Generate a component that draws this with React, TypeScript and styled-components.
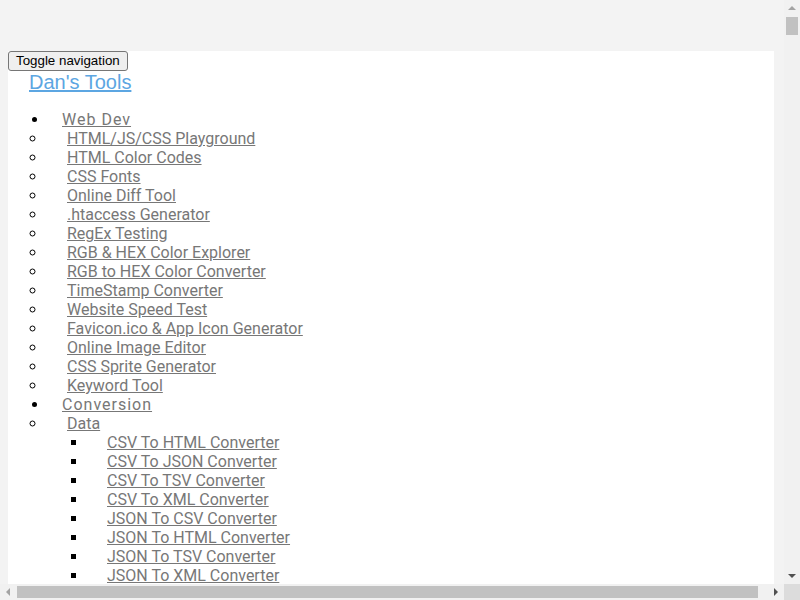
import styled, { createGlobalStyle, css } from "styled-components";

const GlobalStyle = createGlobalStyle`
  html, body {
    margin: 0;
    height: 100%;
    overflow: hidden;
    background: #f3f3f3;
  }
  body {
    font-family: Roboto, "Liberation Sans", sans-serif;
  }
`;

// browser window: page area plus the classic scrollbars
const Viewport = styled.div`
  display: grid;
  grid-template-columns: 1fr 16px;
  grid-template-rows: 1fr 16px;
  width: 100vw;
  height: 100vh;
  background: #f3f3f3;
`;

const ScrollArea = styled.div`
  overflow: hidden;
  min-width: 0;
  min-height: 0;
`;

const VScrollbar = styled.div`
  display: flex;
  flex-direction: column;
  background: #f1f1f1;
`;

const HScrollbar = styled.div`
  display: flex;
  flex-direction: row;
  background: #f1f1f1;
`;

const Corner = styled.div`
  background: #dcdcdc;
`;

const ArrowBox = styled.div`
  flex: 0 0 16px;
  width: 16px;
  height: 16px;
  display: flex;
  align-items: center;
  justify-content: center;
`;

type Dir = "up" | "down" | "left" | "right";

const Arrow = styled.span<{ $dir: Dir; $active?: boolean }>`
  width: 0;
  height: 0;
  ${(p) => {
    const c = p.$active ? "#505050" : "#a3a3a3";
    switch (p.$dir) {
      case "up":
        return css`
          border-left: 4px solid transparent;
          border-right: 4px solid transparent;
          border-bottom: 4px solid ${c};
        `;
      case "down":
        return css`
          border-left: 4px solid transparent;
          border-right: 4px solid transparent;
          border-top: 4px solid ${c};
        `;
      case "left":
        return css`
          border-top: 4px solid transparent;
          border-bottom: 4px solid transparent;
          border-right: 4px solid ${c};
        `;
      default:
        return css`
          border-top: 4px solid transparent;
          border-bottom: 4px solid transparent;
          border-left: 4px solid ${c};
        `;
    }
  }}
`;

const VTrack = styled.div`
  flex: 1;
  padding: 1px 2px 0 2px;
`;

const HTrack = styled.div`
  flex: 1;
  padding: 2px 0 2px 1px;
`;

const VThumb = styled.div`
  height: 18px;
  background: #c1c1c1;
`;

const HThumb = styled.div`
  width: 741px;
  height: 100%;
  background: #c1c1c1;
`;

const PageRoot = styled.div`
  padding: 50px 8px 8px 8px;
`;

const NavbarRoot = styled.nav`
  background: #ffffff;
  margin-right: 2px;
`;

const ToggleButton = styled.button`
  display: block;
  margin: 1px 0 0 0;
  padding: 1px 7px;
  font-family: "Liberation Sans", Arial, sans-serif;
  font-size: 13.33px;
  line-height: 16px;
  color: #000;
  background: #efefef;
  border: 1px solid #767676;
  border-radius: 3px;
`;

const Brand = styled.a`
  display: inline-block;
  margin-left: 21px;
  font-family: "Liberation Sans", Arial, sans-serif;
  font-size: 20px;
  line-height: 23px;
  color: #5ca6e2;
  text-decoration: underline;
  cursor: pointer;
`;

const TopList = styled.ul`
  margin: 16px 0 0 0;
  padding: 0 0 0 41px;
  list-style: disc;
  font-size: 16px;
  line-height: 19px;
`;

const SubList = styled.ul<{ $level: 2 | 3 }>`
  margin: 0 0 0 ${(p) => (p.$level === 2 ? -2 : 0)}px;
  padding: 0 0 0 ${(p) => (p.$level === 2 ? 0 : 41)}px;
  list-style: ${(p) => (p.$level === 3 ? "square" : "circle")};
`;

const NavLink = styled.a<{ $level: 1 | 2 | 3 }>`
  margin-left: ${(p) => (p.$level === 1 ? 13 : p.$level === 2 ? 20 : 19)}px;
  color: #777777;
  letter-spacing: ${(p) => (p.$level === 1 ? "1px" : "0")};
  text-decoration: underline;
  cursor: pointer;
`;

type Group = { name: string; items?: string[]; groups?: { name: string; items: string[] }[] };

const menu: Group[] = [
  {
    name: "Web Dev",
    items: [
      "HTML/JS/CSS Playground",
      "HTML Color Codes",
      "CSS Fonts",
      "Online Diff Tool",
      ".htaccess Generator",
      "RegEx Testing",
      "RGB & HEX Color Explorer",
      "RGB to HEX Color Converter",
      "TimeStamp Converter",
      "Website Speed Test",
      "Favicon.ico & App Icon Generator",
      "Online Image Editor",
      "CSS Sprite Generator",
      "Keyword Tool",
    ],
  },
  {
    name: "Conversion",
    groups: [
      {
        name: "Data",
        items: [
          "CSV To HTML Converter",
          "CSV To JSON Converter",
          "CSV To TSV Converter",
          "CSV To XML Converter",
          "JSON To CSV Converter",
          "JSON To HTML Converter",
          "JSON To TSV Converter",
          "JSON To XML Converter",
          "TSV To CSV Converter",
          "TSV To HTML Converter",
          "TSV To JSON Converter",
          "TSV To XML Converter",
        ],
      },
      {
        name: "Text",
        items: ["Case Converter", "Text To Binary", "Binary To Text", "Text To Hex"],
      },
    ],
  },
  {
    name: "Encoders / Decoders",
    items: ["Base64 Encode / Decode", "URL Encode / Decode", "MD5 Hash Generator"],
  },
];

function App() {
  return (
    <>
      <GlobalStyle />
      <Viewport>
        <ScrollArea>
          <PageRoot>
            <NavbarRoot>
              <ToggleButton type="button">Toggle navigation</ToggleButton>
              <Brand>Dan's Tools</Brand>
              <TopList>
                {menu.map((group) => (
                  <li key={group.name}>
                    <NavLink $level={1}>{group.name}</NavLink>
                    <SubList $level={2}>
                      {group.items &&
                        group.items.map((item) => (
                          <li key={item}>
                            <NavLink $level={2}>{item}</NavLink>
                          </li>
                        ))}
                      {group.groups &&
                        group.groups.map((sub) => (
                          <li key={sub.name}>
                            <NavLink $level={2}>{sub.name}</NavLink>
                            <SubList $level={3}>
                              {sub.items.map((item) => (
                                <li key={item}>
                                  <NavLink $level={3}>{item}</NavLink>
                                </li>
                              ))}
                            </SubList>
                          </li>
                        ))}
                    </SubList>
                  </li>
                ))}
              </TopList>
            </NavbarRoot>
          </PageRoot>
        </ScrollArea>
        <VScrollbar>
          <ArrowBox>
            <Arrow $dir="up" />
          </ArrowBox>
          <VTrack>
            <VThumb />
          </VTrack>
          <ArrowBox>
            <Arrow $dir="down" $active />
          </ArrowBox>
        </VScrollbar>
        <HScrollbar>
          <ArrowBox>
            <Arrow $dir="left" />
          </ArrowBox>
          <HTrack>
            <HThumb />
          </HTrack>
          <ArrowBox>
            <Arrow $dir="right" $active />
          </ArrowBox>
        </HScrollbar>
        <Corner />
      </Viewport>
    </>
  );
}

export default App;
